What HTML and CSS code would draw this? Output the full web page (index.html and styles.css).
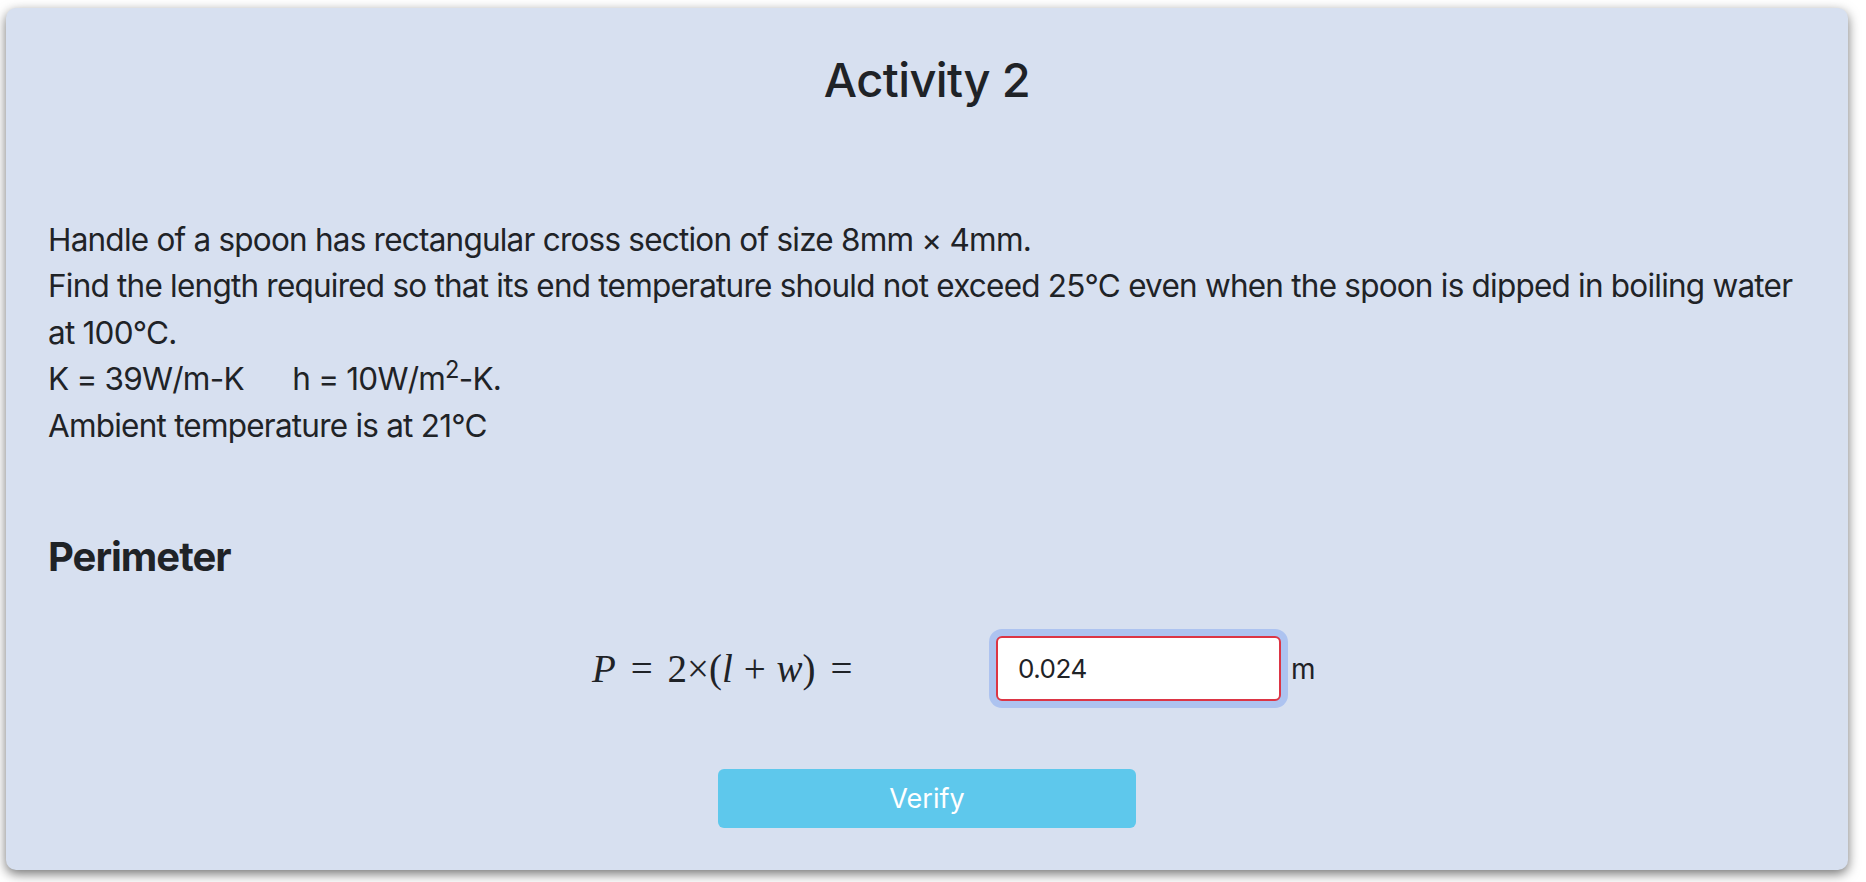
FILE: index.html
```html
<!DOCTYPE html>
<html lang="en">
<head>
<meta charset="utf-8">
<title>Activity 2</title>
<link rel="stylesheet" href="styles.css">
</head>
<body>
<main class="card">
  <h2 class="title">Activity 2</h2>
  <p class="problem">Handle of a spoon has rectangular cross section of size 8mm × 4mm.<br>Find the length required so that its end temperature should not exceed 25°C even when the spoon is dipped in boiling water<br>at 100°C.<br>K = 39W/m-K&nbsp;&nbsp;&nbsp;&nbsp;&nbsp;&nbsp;h = 10W/m<sup>2</sup>-K.<br>Ambient temperature is at 21°C</p>
  <h3 class="section">Perimeter</h3>
  <div class="formula-row">
    <div class="formula"><i>P</i><span class="rel">=</span>2×(<i>l</i><span class="bin">+</span><i>w</i>)<span class="rel">=</span></div>
    <div class="answer">
      <input class="answer-input" type="text" value="0.024">
      <span class="unit">m</span>
    </div>
  </div>
  <div class="actions">
    <button class="verify" type="button">Verify</button>
  </div>
</main>
</body>
</html>
```
FILE: styles.css
```css
html, body {
  margin: 0;
  height: 100%;
  background: #ffffff;
}
body {
  box-sizing: border-box;
  padding: 8px 18px 12px 6px;
  font-family: Inter, "Noto Sans", sans-serif;
  color: #1f2327;
}
.card {
  box-sizing: border-box;
  height: 862px;
  background: #d7e0f0;
  border-radius: 10px;
  box-shadow: 0 4px 12px rgba(0, 0, 0, 0.55);
  padding: 0 42px;
  display: flex;
  flex-direction: column;
}
.title {
  margin: 44px 0 0;
  font-size: 47px;
  line-height: 56px;
  font-weight: 500;
  letter-spacing: -0.6px;
  text-align: center;
}
.problem {
  margin: 109px -20px 0 0;
  font-size: 31.5px;
  line-height: 46.4px;
  font-weight: 400;
  letter-spacing: -0.78px;
  white-space: nowrap;
}
.problem sup {
  font-size: 0.75em;
  line-height: 0;
  vertical-align: 0.5em;
}
.section {
  margin: 84px 0 0;
  font-size: 40px;
  line-height: 48px;
  font-weight: 700;
  letter-spacing: -1px;
}
.formula-row {
  margin-top: 55px;
  display: flex;
  align-items: center;
  padding-left: 544px;
}
.formula {
  width: 260px;
  font-family: "Liberation Serif", "Times New Roman", serif;
  font-size: 39px;
  white-space: nowrap;
}
.formula i {
  font-style: italic;
}
.formula .rel {
  margin: 0 0.38em;
}
.formula .bin {
  margin: 0 0.28em;
}
.answer {
  margin-left: 144px;
  display: flex;
  align-items: center;
  gap: 10px;
}
.answer-input {
  box-sizing: border-box;
  width: 285px;
  height: 65px;
  padding: 0 20px;
  border: 2px solid #dc3545;
  border-radius: 6px;
  background: #ffffff;
  box-shadow: 0 0 0 7px #adc3f0;
  font-family: Inter, "Noto Sans", sans-serif;
  font-size: 26px;
  letter-spacing: -0.5px;
  color: #1f2327;
  outline: none;
}
.unit {
  font-size: 28px;
}
.actions {
  margin-top: 68px;
  display: flex;
  justify-content: center;
}
.verify {
  width: 418px;
  height: 59px;
  border: none;
  border-radius: 6px;
  background: #5ec8ec;
  color: #ffffff;
  font-family: Inter, "Noto Sans", sans-serif;
  font-size: 27px;
  font-weight: 400;
}
```
